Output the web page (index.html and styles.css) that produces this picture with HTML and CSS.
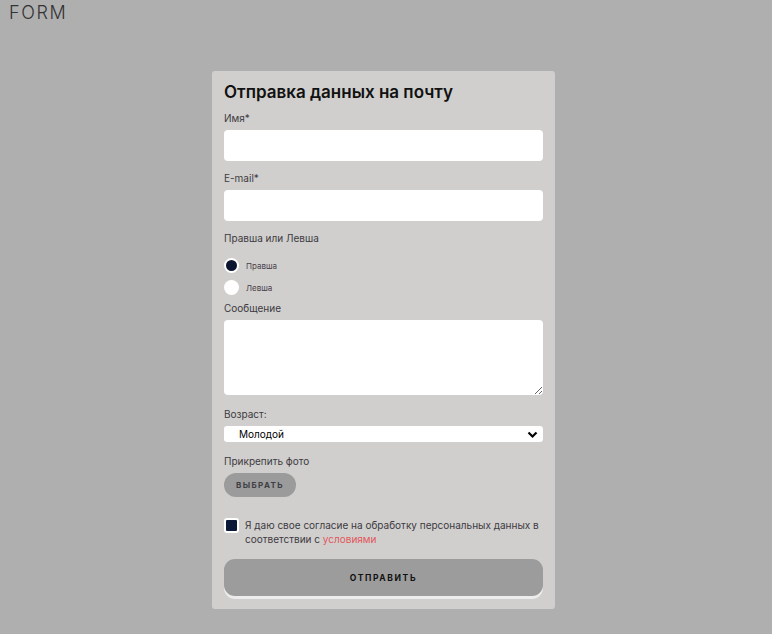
FILE: index.html
```html
<!DOCTYPE html>
<html lang="ru">
<head>
<meta charset="utf-8">
<title>FORM</title>
<link rel="stylesheet" href="styles.css">
</head>
<body>
<div class="page-title">FORM</div>
<main class="wrap">
  <form class="card">
    <h1 class="card-title">Отправка данных на почту</h1>

    <label class="label first">Имя*</label>
    <input class="input" type="text">

    <label class="label">E-mail*</label>
    <input class="input" type="text">

    <div class="label">Правша или Левша</div>
    <div class="radios">
      <label class="radio"><span class="dot checked"></span><span class="radio-text">Правша</span></label>
      <label class="radio"><span class="dot"></span><span class="radio-text">Левша</span></label>
    </div>

    <label class="label msg">Сообщение</label>
    <textarea class="textarea"></textarea>

    <label class="label">Возраст:</label>
    <div class="select">
      <span class="select-text">Молодой</span>
      <svg class="chev" width="11" height="8" viewBox="0 0 11 8"><path d="M1.5 1.5 L5.5 5.5 L9.5 1.5" fill="none" stroke="#000" stroke-width="2.2"/></svg>
    </div>

    <div class="label">Прикрепить фото</div>
    <button type="button" class="pick">ВЫБРАТЬ</button>

    <label class="agree">
      <span class="box"></span>
      <span class="agree-text">Я даю свое согласие на обработку персональных данных в соответствии с <a class="link">условиями</a></span>
    </label>

    <button type="button" class="submit">ОТПРАВИТЬ</button>
  </form>
</main>
</body>
</html>
```
FILE: styles.css
```css
* { box-sizing: border-box; }
html, body { margin: 0; padding: 0; }
body {
  background: #afafaf;
  font-family: Inter, "Noto Sans", "Liberation Sans", sans-serif;
  color: #3a383e;
  height: 634px;
}
.page-title {
  position: absolute;
  left: 9px;
  top: 3px;
  font-size: 18px;
  letter-spacing: 1.6px;
  font-weight: 300;
  color: #333;
  line-height: 20px;
}
.wrap {
  padding-top: 71px;
  display: flex;
  justify-content: center;
  padding-right: 5px;
}
.card {
  width: 343px;
  height: 538px;
  background: #d0cfcd;
  border-radius: 3px;
  padding: 9px 12px 10px;
  display: flex;
  flex-direction: column;
}
.card-title {
  margin: 0;
  font-size: 17px;
  line-height: 24px;
  font-weight: 600;
  color: #111;
}
.label {
  font-size: 10px;
  line-height: 14px;
  color: #3d3a42;
  margin-top: 11px;
  margin-bottom: 5px;
}
.label.first { margin-top: 7px; }
.label.msg { margin-top: 6px; }
.input {
  display: block;
  width: 100%;
  height: 31px;
  border: none;
  border-radius: 4px;
  background: #fff;
  margin: 0;
  outline: none;
}
.input + .label { margin-top: 10px; }
.radios {
  display: flex;
  flex-direction: column;
  gap: 7px;
  margin-top: 8px;
}
.radio {
  display: flex;
  align-items: center;
  height: 15px;
}
.dot {
  width: 15px;
  height: 15px;
  border-radius: 50%;
  background: #fff;
  flex: none;
}
.dot.checked {
  background: #0c1530;
  border: 2.5px solid #fff;
}
.radio-text {
  font-size: 8px;
  margin-left: 7px;
  color: #4a3f4c;
}
.textarea {
  display: block;
  width: 100%;
  height: 75px;
  border: none;
  border-radius: 4px;
  background: #fff;
  margin: 0;
  resize: vertical;
  outline: none;
}
.textarea + .label { margin-top: 12px; }
.select {
  position: relative;
  height: 16px;
  background: #fff;
  border-radius: 3px;
  display: flex;
  align-items: center;
  padding-left: 15px;
}
.select-text {
  font-size: 10px;
  color: #000;
  line-height: 14px;
}
.chev {
  position: absolute;
  right: 5px;
  top: 5px;
}
.select + .label { margin-top: 12px; }
.pick {
  align-self: flex-start;
  width: 72px;
  height: 24px;
  border: none;
  border-radius: 12px;
  background: #9b9b9b;
  color: #3e3e44;
  font-family: inherit;
  font-size: 8px;
  font-weight: 700;
  letter-spacing: 1.4px;
  padding: 0;
}
.agree {
  display: flex;
  align-items: flex-start;
  margin-top: 21px;
}
.box {
  flex: none;
  width: 15px;
  height: 15px;
  background: #0c1838;
  border: 2px solid #fff;
  border-radius: 3px;
}
.agree-text {
  margin-left: 6px;
  font-size: 10px;
  line-height: 14px;
  color: #3d3a42;
}
.link { color: #e0575d; }
.submit {
  margin-top: 13px;
  width: 100%;
  height: 37px;
  border: none;
  border-radius: 11px;
  background: #9c9c9c;
  box-shadow: 0 3px 0 #ececec;
  color: #111;
  font-family: inherit;
  font-size: 8.5px;
  font-weight: 700;
  letter-spacing: 1.6px;
  padding: 0;
}
```
